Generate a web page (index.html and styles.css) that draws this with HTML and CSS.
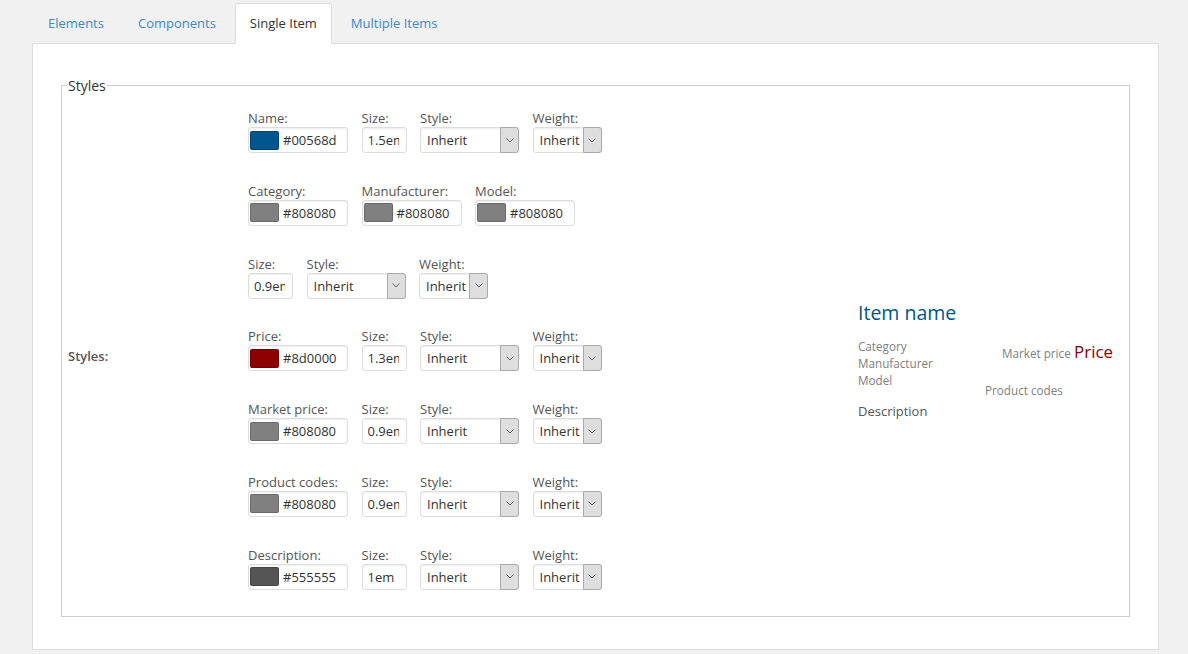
FILE: index.html
```html
<!DOCTYPE html>
<html>
<head>
<meta charset="utf-8">
<link rel="stylesheet" href="styles.css">
</head>
<body>
<div class="wrap">
  <nav class="tabs">
    <a class="tab">Elements</a>
    <a class="tab">Components</a>
    <a class="tab active">Single Item</a>
    <a class="tab">Multiple Items</a>
  </nav>
  <div class="panel">
    <fieldset class="box">
      <legend>Styles</legend>
      <div class="layout">
        <div class="th">Styles:</div>
        <div class="fields">
          <div class="row">
            <div class="field"><label>Name:</label><div class="color"><span class="sw" style="background:#00568d"></span>#00568d</div></div>
            <div class="field"><label>Size:</label><input class="size" type="text" value="1.5em"></div>
            <div class="field"><label>Style:</label><div class="select wide"><span>Inherit</span><span class="arr"><svg width="8" height="5" viewBox="0 0 8 5"><path d="M0.5 0.5 L4 4 L7.5 0.5" fill="none" stroke="#666" stroke-width="1"/></svg></span></div></div>
            <div class="field"><label>Weight:</label><div class="select narrow"><span>Inherit</span><span class="arr"><svg width="8" height="5" viewBox="0 0 8 5"><path d="M0.5 0.5 L4 4 L7.5 0.5" fill="none" stroke="#666" stroke-width="1"/></svg></span></div></div>
          </div>
          <div class="row">
            <div class="field"><label>Category:</label><div class="color"><span class="sw" style="background:#808080"></span>#808080</div></div>
            <div class="field"><label>Manufacturer:</label><div class="color"><span class="sw" style="background:#808080"></span>#808080</div></div>
            <div class="field"><label>Model:</label><div class="color"><span class="sw" style="background:#808080"></span>#808080</div></div>
          </div>
          <div class="row">
            <div class="field"><label>Size:</label><input class="size" type="text" value="0.9em"></div>
            <div class="field"><label>Style:</label><div class="select wide"><span>Inherit</span><span class="arr"><svg width="8" height="5" viewBox="0 0 8 5"><path d="M0.5 0.5 L4 4 L7.5 0.5" fill="none" stroke="#666" stroke-width="1"/></svg></span></div></div>
            <div class="field"><label>Weight:</label><div class="select narrow"><span>Inherit</span><span class="arr"><svg width="8" height="5" viewBox="0 0 8 5"><path d="M0.5 0.5 L4 4 L7.5 0.5" fill="none" stroke="#666" stroke-width="1"/></svg></span></div></div>
          </div>
          <div class="row">
            <div class="field"><label>Price:</label><div class="color"><span class="sw" style="background:#8d0000"></span>#8d0000</div></div>
            <div class="field"><label>Size:</label><input class="size" type="text" value="1.3em"></div>
            <div class="field"><label>Style:</label><div class="select wide"><span>Inherit</span><span class="arr"><svg width="8" height="5" viewBox="0 0 8 5"><path d="M0.5 0.5 L4 4 L7.5 0.5" fill="none" stroke="#666" stroke-width="1"/></svg></span></div></div>
            <div class="field"><label>Weight:</label><div class="select narrow"><span>Inherit</span><span class="arr"><svg width="8" height="5" viewBox="0 0 8 5"><path d="M0.5 0.5 L4 4 L7.5 0.5" fill="none" stroke="#666" stroke-width="1"/></svg></span></div></div>
          </div>
          <div class="row">
            <div class="field"><label>Market price:</label><div class="color"><span class="sw" style="background:#808080"></span>#808080</div></div>
            <div class="field"><label>Size:</label><input class="size" type="text" value="0.9em"></div>
            <div class="field"><label>Style:</label><div class="select wide"><span>Inherit</span><span class="arr"><svg width="8" height="5" viewBox="0 0 8 5"><path d="M0.5 0.5 L4 4 L7.5 0.5" fill="none" stroke="#666" stroke-width="1"/></svg></span></div></div>
            <div class="field"><label>Weight:</label><div class="select narrow"><span>Inherit</span><span class="arr"><svg width="8" height="5" viewBox="0 0 8 5"><path d="M0.5 0.5 L4 4 L7.5 0.5" fill="none" stroke="#666" stroke-width="1"/></svg></span></div></div>
          </div>
          <div class="row">
            <div class="field"><label>Product codes:</label><div class="color"><span class="sw" style="background:#808080"></span>#808080</div></div>
            <div class="field"><label>Size:</label><input class="size" type="text" value="0.9em"></div>
            <div class="field"><label>Style:</label><div class="select wide"><span>Inherit</span><span class="arr"><svg width="8" height="5" viewBox="0 0 8 5"><path d="M0.5 0.5 L4 4 L7.5 0.5" fill="none" stroke="#666" stroke-width="1"/></svg></span></div></div>
            <div class="field"><label>Weight:</label><div class="select narrow"><span>Inherit</span><span class="arr"><svg width="8" height="5" viewBox="0 0 8 5"><path d="M0.5 0.5 L4 4 L7.5 0.5" fill="none" stroke="#666" stroke-width="1"/></svg></span></div></div>
          </div>
          <div class="row">
            <div class="field"><label>Description:</label><div class="color"><span class="sw" style="background:#555555"></span>#555555</div></div>
            <div class="field"><label>Size:</label><input class="size" type="text" value="1em"></div>
            <div class="field"><label>Style:</label><div class="select wide"><span>Inherit</span><span class="arr"><svg width="8" height="5" viewBox="0 0 8 5"><path d="M0.5 0.5 L4 4 L7.5 0.5" fill="none" stroke="#666" stroke-width="1"/></svg></span></div></div>
            <div class="field"><label>Weight:</label><div class="select narrow"><span>Inherit</span><span class="arr"><svg width="8" height="5" viewBox="0 0 8 5"><path d="M0.5 0.5 L4 4 L7.5 0.5" fill="none" stroke="#666" stroke-width="1"/></svg></span></div></div>
          </div>
        </div>
        <div class="preview">
          <div class="p-name">Item name</div>
          <div class="p-details">
            <div class="p-left">
              <div class="p-meta">Category</div>
              <div class="p-meta">Manufacturer</div>
              <div class="p-meta">Model</div>
            </div>
            <div class="p-right">
              <div class="p-price-row"><span class="p-market">Market price</span> <span class="p-price">Price</span></div>
              <div class="p-codes">Product codes</div>
            </div>
          </div>
          <div class="p-desc">Description</div>
        </div>
      </div>
    </fieldset>
  </div>
</div>
</body>
</html>
```

FILE: styles.css
```css
* { box-sizing: border-box; }
html, body { margin: 0; padding: 0; }
body {
  background: #f1f1f1;
  font-family: "Open Sans", "Liberation Sans", sans-serif;
  font-size: 13px;
  color: #444;
}
.wrap {
  padding: 3px 29px 0 32px;
}
.tabs {
  display: flex;
  gap: 4px;
  height: 40px;
  padding-left: 1px;
}
.tab {
  display: block;
  height: 41px;
  line-height: 39px;
  padding: 0 14px;
  border: 1px solid transparent;
  border-bottom: none;
  border-radius: 3px 3px 0 0;
  color: #3f87cf;
  position: relative;
  z-index: 2;
}
.tab.active {
  background: #fff;
  border-color: #ddd;
  color: #333;
}
.panel {
  background: #fff;
  border: 1px solid #ddd;
  height: 607px;
  padding: 32px 28px 0 28px;
}
.box {
  margin: 0;
  border: 1px solid #ccc;
  padding: 0 6px 0 6px;
  height: 541px;
}
.box legend {
  padding: 0 1px;
  font-size: 14px;
  line-height: 19px;
  color: #333;
  margin-left: -1px;
}
.layout {
  display: flex;
  height: 520px;
}
.th {
  width: 180px;
  align-self: center;
  font-weight: 600;
  color: #555;
  padding-top: 1px;
}
.fields {
  width: 610px;
  padding-top: 14px;
}
.row {
  display: flex;
  gap: 13.5px;
  margin-bottom: 28.8px;
}
.row:last-child { margin-bottom: 0; }
.field label {
  display: block;
  line-height: 18px;
  color: #555;
}
.color, .size, .select {
  height: 26px;
  border: 1px solid #ddd;
  border-radius: 3px;
  box-shadow: inset 0 1px 2px rgba(0,0,0,0.07);
  background: #fff;
  color: #333;
  font-family: "Open Sans", "Liberation Sans", sans-serif;
  font-size: 13px;
}
.color {
  width: 100px;
  display: flex;
  align-items: center;
  padding-left: 1px;
  gap: 4px;
}
.sw {
  display: block;
  width: 29px;
  height: 19px;
  border: 1px solid rgba(0,0,0,0.18);
  border-radius: 2px;
}
.size {
  width: 45px;
  padding: 0 7px 0 5px;
  outline: none;
  display: block;
}
.select {
  display: flex;
  align-items: center;
  justify-content: space-between;
  padding-left: 6px;
}
.select.wide { width: 99px; }
.select.narrow { width: 69px; }
.arr {
  width: 19px;
  height: 26px;
  margin: -1px -1px -1px 0;
  background: #dedede;
  border: 1px solid #aaa;
  border-radius: 0 3px 3px 0;
  display: flex;
  align-items: center;
  justify-content: center;
}
.arr svg { display: block; }
.preview {
  width: 255px;
  align-self: center;
  padding-top: 9px;
}
.p-name {
  font-size: 19.5px;
  line-height: 26px;
  color: #00568d;
  margin-bottom: 12px;
}
.p-details {
  display: flex;
  align-items: flex-start;
}
.p-left {
  width: 127px;
}
.p-meta {
  font-size: 11.7px;
  line-height: 17px;
  color: #808080;
}
.p-right {
  width: 128px;
  padding-top: 2px;
}
.p-price-row {
  text-align: right;
  line-height: 23px;
  white-space: nowrap;
}
.p-market {
  font-size: 11.7px;
  color: #808080;
}
.p-price {
  font-size: 16.9px;
  color: #8d0000;
}
.p-codes {
  margin-top: 17.5px;
  font-size: 11.7px;
  line-height: 17px;
  color: #808080;
}
.p-desc {
  margin-top: 2.5px;
  line-height: 18px;
  color: #555555;
}
```
